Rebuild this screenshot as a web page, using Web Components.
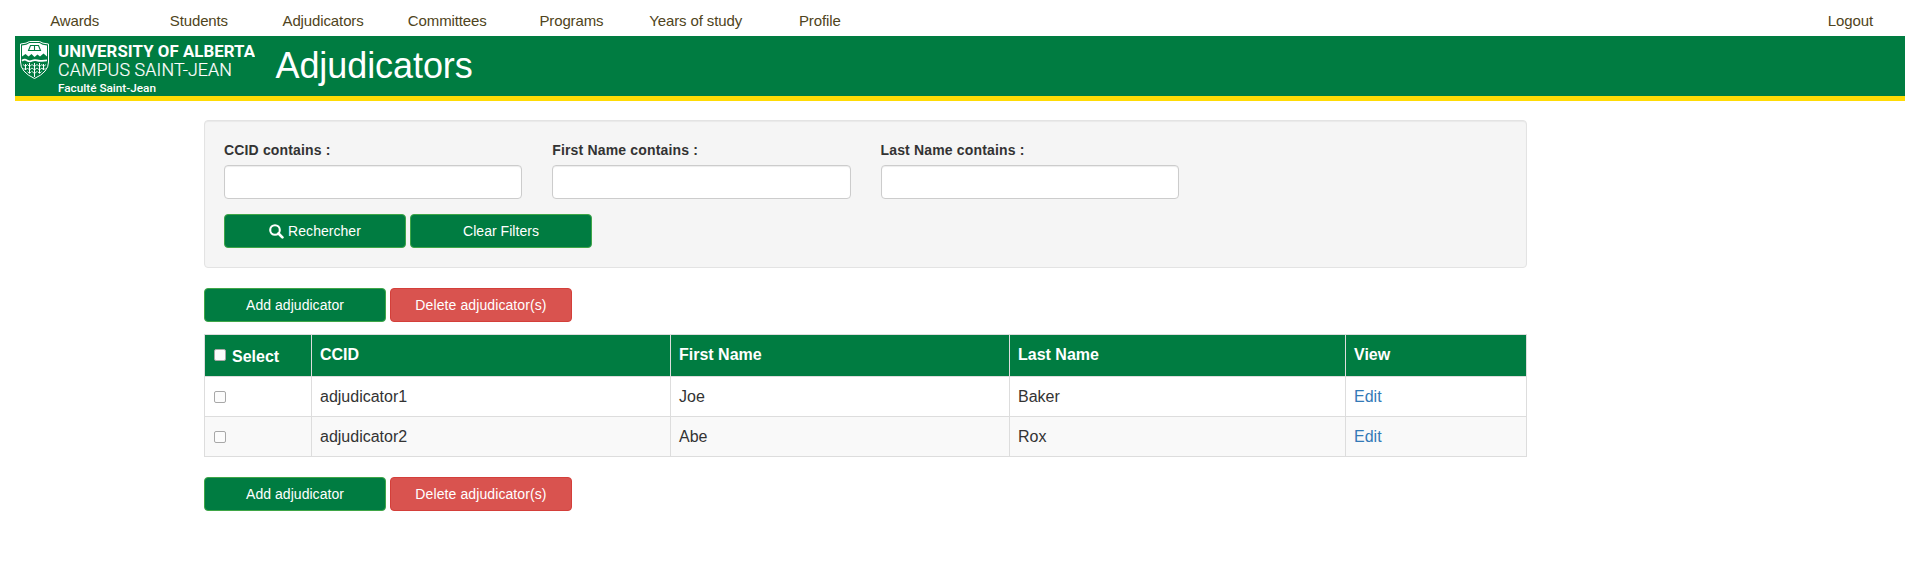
<!DOCTYPE html>
<html lang="en">
<head>
<meta charset="utf-8">
<title>Adjudicators</title>
<style>
body{margin:0;background:#fff;color:#333;font:14px/20px "Liberation Sans",Arial,sans-serif}
</style>
</head>
<body>
<adjudicator-page></adjudicator-page>
<script>
function define(name, html) {
  const template = document.createElement('template');
  template.innerHTML = '<style>*{box-sizing:border-box}</style>' + html;
  customElements.define(name, class extends HTMLElement {
    constructor() {
      super();
      this.attachShadow({ mode: 'open' }).appendChild(template.content.cloneNode(true));
    }
  });
}

define('nav-item', `
<style>:host{display:block;width:124.2px;text-align:center;font-size:15px;letter-spacing:-.12px;line-height:20px}
a{color:#4f4420;text-decoration:none}</style>
<a><slot></slot></a>`);

define('nav-bar', `
<style>:host{display:flex;height:36px;padding:11px 7.5px 0 12.6px}
.end{margin-left:auto}</style>
<nav-item>Awards</nav-item><nav-item>Students</nav-item><nav-item>Adjudicators</nav-item>
<nav-item>Committees</nav-item><nav-item>Programs</nav-item><nav-item>Years of study</nav-item>
<nav-item>Profile</nav-item><nav-item class="end">Logout</nav-item>`);

define('campus-logo', `
<style>:host{display:block;width:240px;height:60px}
svg{display:block}text{fill:#fff;font-family:Roboto,sans-serif}</style>
<svg width="240" height="60" viewBox="0 0 240 60">
  <g fill="none" stroke="#fff">
    <path d="M5.500 8Q12 7.500 14.500 5.500H24.500Q27 7.500 33.500 8V26Q33.500 36 19.500 42.500Q5.500 36 5.500 26Z" stroke-width="1"/>
    <path d="M7 24.800Q9.500 22.800 12 24.400T17 24.800T22 24.400T27 24.800T32 24.400" stroke-width="1.800"/>
    <path d="M10.500 28V34M14.500 27V37M19.500 27V41M24.500 27V37M28.500 28V34" stroke-width="1"/>
    <path d="M8 28.500l2.500 2 2-2M12.500 28.500l2 2 2.500-2M17 28.500l2.500 2 2.500-2M22 28.500l2.500 2 2.500-2M27 28.500l1.500 2 2.500-2M8.500 32l2 2 2-2M12.500 32l2 2 2.500-2M17 32l2.500 2 2.500-2M22 32l2.500 2 2.500-2M27 32l1.500 2 2-2M12.500 35.500l2 2 2-2M17 35.500l2.500 2 2.500-2M22.500 35.500l2 2 2-2" stroke-width=".8"/>
  </g>
  <path fill="#fff" d="M7 9.500Q12 9 14.500 7H24.500Q27 9 32 9.500V20.500L28.500 17.500L25 20.500L22.500 18.500L19.500 21L16.500 18L13.500 20.500L10.500 18L7 20.500Z"/>
  <path fill="#fff" stroke="#007c41" stroke-width="1.100" d="M15.500 9.500H23.500L25.500 14.500H13.500ZM19.500 9.500V14.500"/>
  <text x="43" y="21" font-size="16.800" font-weight="700" textLength="197" lengthAdjust="spacing">UNIVERSITY OF ALBERTA</text>
  <text x="43" y="40" font-size="17.800" font-weight="300" stroke="#fff" stroke-width=".2" textLength="174" lengthAdjust="spacing">CAMPUS SAINT-JEAN</text>
  <text x="43" y="56" font-size="11.800" font-weight="500" textLength="98" lengthAdjust="spacing">Faculté Saint-Jean</text>
</svg>`);

define('page-banner', `
<style>:host{display:flex;height:65px;margin:0 15px;background:#007c41;border-bottom:5px solid #ffdb05}
h1{margin:10px 0 0 20.500px;color:#fff;font-size:36px;font-weight:400;line-height:40px;letter-spacing:-.08px}</style>
<campus-logo></campus-logo><h1><slot></slot></h1>`);

define('action-button', `
<style>:host{display:block;width:182px;height:34px}
button{display:flex;align-items:center;justify-content:center;width:100%;height:100%;padding:0;color:#fff;background:#007c41;border:1px solid #3fa648;border-radius:4px;font:14px/20px "Liberation Sans",Arial,sans-serif;letter-spacing:.04px}
:host([danger]) button{background:#d9534f;border-color:#d43f3a;letter-spacing:.1px}
svg{margin-right:4px;display:none}:host([search]) svg{display:block}</style>
<button><svg width="15" height="15" viewBox="0 0 15 15" fill="none" stroke="#fff"><circle cx="6" cy="6" r="4.800" stroke-width="2.100"/><path d="M9.500 9.500L13.400 13.400" stroke-width="2.700" stroke-linecap="round"/></svg><span><slot></slot></span></button>`);

define('filter-field', `
<style>:host{display:block;padding:0 15px}
label{display:block;margin-bottom:5px;font-weight:700;letter-spacing:.16px}
input{display:block;width:100%;height:34px;padding:6px 12px;border:1px solid #ccc;border-radius:4px;background:#fff;box-shadow:inset 0 1px 1px rgba(0,0,0,.075);outline:0}</style>
<label><slot></slot></label><input type="text">`);

define('filter-panel', `
<style>:host{display:block;height:148px;padding:19px;background:#f5f5f5;border:1px solid #e3e3e3;border-radius:4px;box-shadow:inset 0 1px 1px rgba(0,0,0,.05)}
.fields{display:grid;grid-template-columns:repeat(4,1fr);margin:0 -15px 15px}
.buttons{display:flex;gap:4px}</style>
<div class="fields"><filter-field>CCID contains :</filter-field><filter-field>First Name contains :</filter-field><filter-field>Last Name contains :</filter-field></div>
<div class="buttons"><action-button search>Rechercher</action-button><action-button>Clear Filters</action-button></div>`);

define('action-bar', `
<style>:host{display:flex;gap:4px}</style>
<action-button>Add adjudicator</action-button><action-button danger>Delete adjudicator(s)</action-button>`);

define('check-box', `
<style>:host{display:block;width:12px;height:12px}
input{appearance:none;display:block;width:12px;height:12px;margin:0;border:1px solid #a8a8a8;border-radius:2px;background:#fcfcfc}</style>
<input type="checkbox">`);

define('table-cell', `
<style>:host{display:flex;align-items:flex-start;padding:8px;background:#fff;color:#333;font-size:16px;line-height:23px}
:host([head]){background:#007c41;color:#fff;font-weight:700}
:host([alt]){background:#f9f9f9}
::slotted(a){color:#337ab7;text-decoration:none}
::slotted(check-box){margin:6px 6px 0 1px}
::slotted(span){margin-top:2px}</style>
<slot></slot>`);

define('adjudicator-table', `
<style>:host{display:grid;grid-template-columns:106px 358px 338px 335px 180px;grid-template-rows:41px 39px 39px;gap:1px;padding:1px;background:#ddd}</style>
<table-cell head><check-box></check-box><span>Select</span></table-cell><table-cell head>CCID</table-cell><table-cell head>First Name</table-cell><table-cell head>Last Name</table-cell><table-cell head>View</table-cell>
<table-cell><check-box></check-box></table-cell><table-cell>adjudicator1</table-cell><table-cell>Joe</table-cell><table-cell>Baker</table-cell><table-cell><a>Edit</a></table-cell>
<table-cell alt><check-box></check-box></table-cell><table-cell alt>adjudicator2</table-cell><table-cell alt>Abe</table-cell><table-cell alt>Rox</table-cell><table-cell alt><a>Edit</a></table-cell>`);

define('adjudicator-page', `
<style>:host{display:block;height:579px;overflow:hidden}
main{width:1323px;margin:19px 0 0 204px}
action-bar{margin:20px 0 12px}
adjudicator-table+action-bar{margin:20px 0 0}</style>
<nav-bar></nav-bar><page-banner>Adjudicators</page-banner>
<main><filter-panel></filter-panel><action-bar></action-bar><adjudicator-table></adjudicator-table><action-bar></action-bar></main>`);
</script>
</body>
</html>
